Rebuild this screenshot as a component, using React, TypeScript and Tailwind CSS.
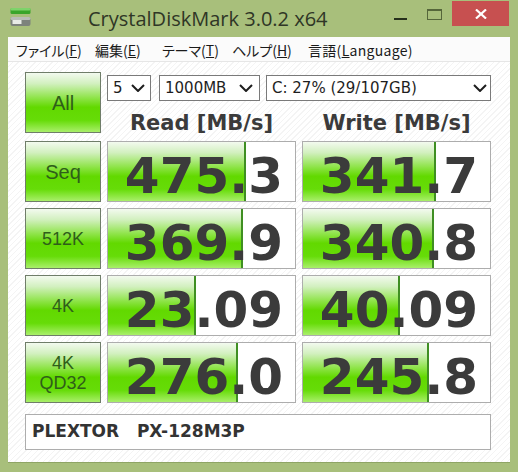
import React from 'react';

const rows = [
  { label: ['Seq'], comic: true, read: '475.3', readFill: 138, write: '341.7', writeFill: 133 },
  { label: ['512K'], comic: false, read: '369.9', readFill: 135, write: '340.8', writeFill: 131 },
  { label: ['4K'], comic: false, read: '23.09', readFill: 88, write: '40.09', writeFill: 97 },
  { label: ['4K', 'QD32'], comic: false, read: '276.0', readFill: 130, write: '245.8', writeFill: 126 },
];

const greenFill =
  'bg-[linear-gradient(to_bottom,#f3faef_0%,#d2f0bf_18%,#8fe44a_42%,#62d900_58%,#66dc08_80%,#a9ef6a_100%)]';

function Chevron() {
  return (
    <svg width="14" height="8" viewBox="0 0 14 8" className="shrink-0">
      <polyline points="1,1 7,7 13,1" fill="none" stroke="#1e1e1e" strokeWidth="2" />
    </svg>
  );
}

function Select({ w, text, pr }: { w: string; text: string; pr: string }) {
  return (
    <div className={`${w} ${pr} h-[26px] bg-white border border-[#7a7a7a] flex items-center justify-between pl-[5px] text-[15px] text-[#1e1e1e] font-['DejaVu_Sans',sans-serif]`}>
      <span>{text}</span>
      <Chevron />
    </div>
  );
}

function LabelButton({ lines, comic }: { lines: string[]; comic: boolean }) {
  return (
    <div className={`h-[61px] border border-[#6f7d69] ${greenFill} flex flex-col items-center justify-center text-[#2f5e1a] font-['Liberation_Sans',sans-serif] ${comic ? 'text-[20px]' : 'text-[18px] leading-[20px]'}`}>
      {lines.map((l) => (
        <span key={l}>{l}</span>
      ))}
    </div>
  );
}

function ValueBox({ value, fill }: { value: string; fill: number }) {
  return (
    <div className="relative h-[61px] bg-white border border-[#adadad]">
      <div
        className={`absolute left-0 top-0 bottom-0 ${greenFill} border-r-2 border-[#3f8f22]`}
        style={{ width: fill }}
      />
      <div className="relative pt-[1px] pr-[12px] text-right text-[50px] leading-[58px] font-bold text-[#3b3b3b] font-['DejaVu_Sans',sans-serif]">
        <span className="relative top-[4px]">{value}</span>
      </div>
    </div>
  );
}

export default function App() {
  return (
    <div className="w-[518px] h-[472px] bg-[#a8bf7b] flex flex-col overflow-hidden">
      {/* title bar */}
      <div className="h-[37px] flex items-start shrink-0">
        <svg width="22" height="20" viewBox="0 0 22 20" className="ml-[10px] mt-[8px]">
          <rect x="0.5" y="0" width="20" height="6" rx="1.5" fill="#3aa52a" />
          <rect x="0.5" y="0" width="20" height="2.5" rx="1.2" fill="#7ed36a" />
          <rect x="0.5" y="9" width="20" height="9" rx="2" fill="#7d837c" />
          <rect x="0.5" y="9" width="20" height="3" rx="1.5" fill="#b9bdb7" />
          <rect x="2.5" y="12" width="9" height="4" fill="#e8ebe6" />
        </svg>
        <div className="ml-[56px] mt-[5px] leading-[28px] text-[20px] text-[#2f3626] font-['Open_Sans',sans-serif]">
          CrystalDiskMark 3.0.2 x64
        </div>
        <div className="ml-auto mr-[9px] flex items-start">
          <div className="mt-[18px] w-[13px] h-[2px] bg-[#26301c]" />
          <div className="ml-[20px] mt-[9px] w-[15px] h-[11px] border border-t-2 border-[#55663a]" />
          <div className="ml-[10px] mt-[1px] w-[57px] h-[25px] bg-[#c75050] flex items-center justify-center">
            <svg width="12" height="10" viewBox="0 0 12 10">
              <line x1="1" y1="0.5" x2="11" y2="9.5" stroke="#fff" strokeWidth="2.2" />
              <line x1="11" y1="0.5" x2="1" y2="9.5" stroke="#fff" strokeWidth="2.2" />
            </svg>
          </div>
        </div>
      </div>

      <div className="flex-1 mx-[8px] mb-[9px] flex flex-col">
        {/* menu bar */}
        <div className="h-[25px] shrink-0 bg-[#fbfbfb] border-b border-[#e6e6e6] flex items-center pt-[2px] pl-[8px] text-[14px] text-[#1a1a1a] [font-feature-settings:'palt'] font-['Noto_Sans_CJK_JP',sans-serif]">
          <span className="w-[79px]">ファイル(<span className="underline">F</span>)</span>
          <span className="w-[67px]">編集(<span className="underline">E</span>)</span>
          <span className="w-[70px]">テーマ(<span className="underline">T</span>)</span>
          <span className="w-[76px]">ヘルプ(<span className="underline">H</span>)</span>
          <span className="tracking-[0.3px]">言語(<span className="underline">L</span>anguage)</span>
        </div>

        {/* client area */}
        <div className="flex-1 pt-[10px] pl-[17px] bg-[repeating-linear-gradient(135deg,#ffffff_0px,#ffffff_3px,#f4f4f4_3px,#f4f4f4_4px)] border-b border-[#8fa565]">
          <div className="grid grid-cols-[76px_189px_189px] gap-x-[6px] gap-y-[6px]">
            <LabelButton lines={['All']} comic />
            <div className="col-span-2 flex flex-col">
              <div className="mt-[3px] flex">
                <Select w="w-[45px]" pr="pr-[5px]" text="5" />
                <div className="ml-[8px]">
                  <Select w="w-[101px]" pr="pr-[6px]" text="1000MB" />
                </div>
                <div className="ml-[6px]">
                  <Select w="w-[225px]" pr="pr-[3px]" text="C: 27% (29/107GB)" />
                </div>
              </div>
              <div className="grid grid-cols-[189px_189px] gap-x-[6px] pt-[10px] leading-[24px] text-[21px] font-bold text-[#3b3b3b] font-['DejaVu_Sans',sans-serif]">
                <div className="text-center">Read [MB/s]</div>
                <div className="text-center">Write [MB/s]</div>
              </div>
            </div>

            {rows.map((r) => (
              <React.Fragment key={r.read}>
                <LabelButton lines={r.label} comic={r.comic} />
                <ValueBox value={r.read} fill={r.readFill} />
                <ValueBox value={r.write} fill={r.writeFill} />
              </React.Fragment>
            ))}
          </div>

          <div className="mt-[11px] w-[466px] h-[36px] bg-white border border-[#adadad] flex items-center pl-[6px] text-[17px] font-bold text-[#333] whitespace-pre font-['DejaVu_Sans',sans-serif]">
            PLEXTOR   PX-128M3P
          </div>
        </div>
      </div>
    </div>
  );
}
